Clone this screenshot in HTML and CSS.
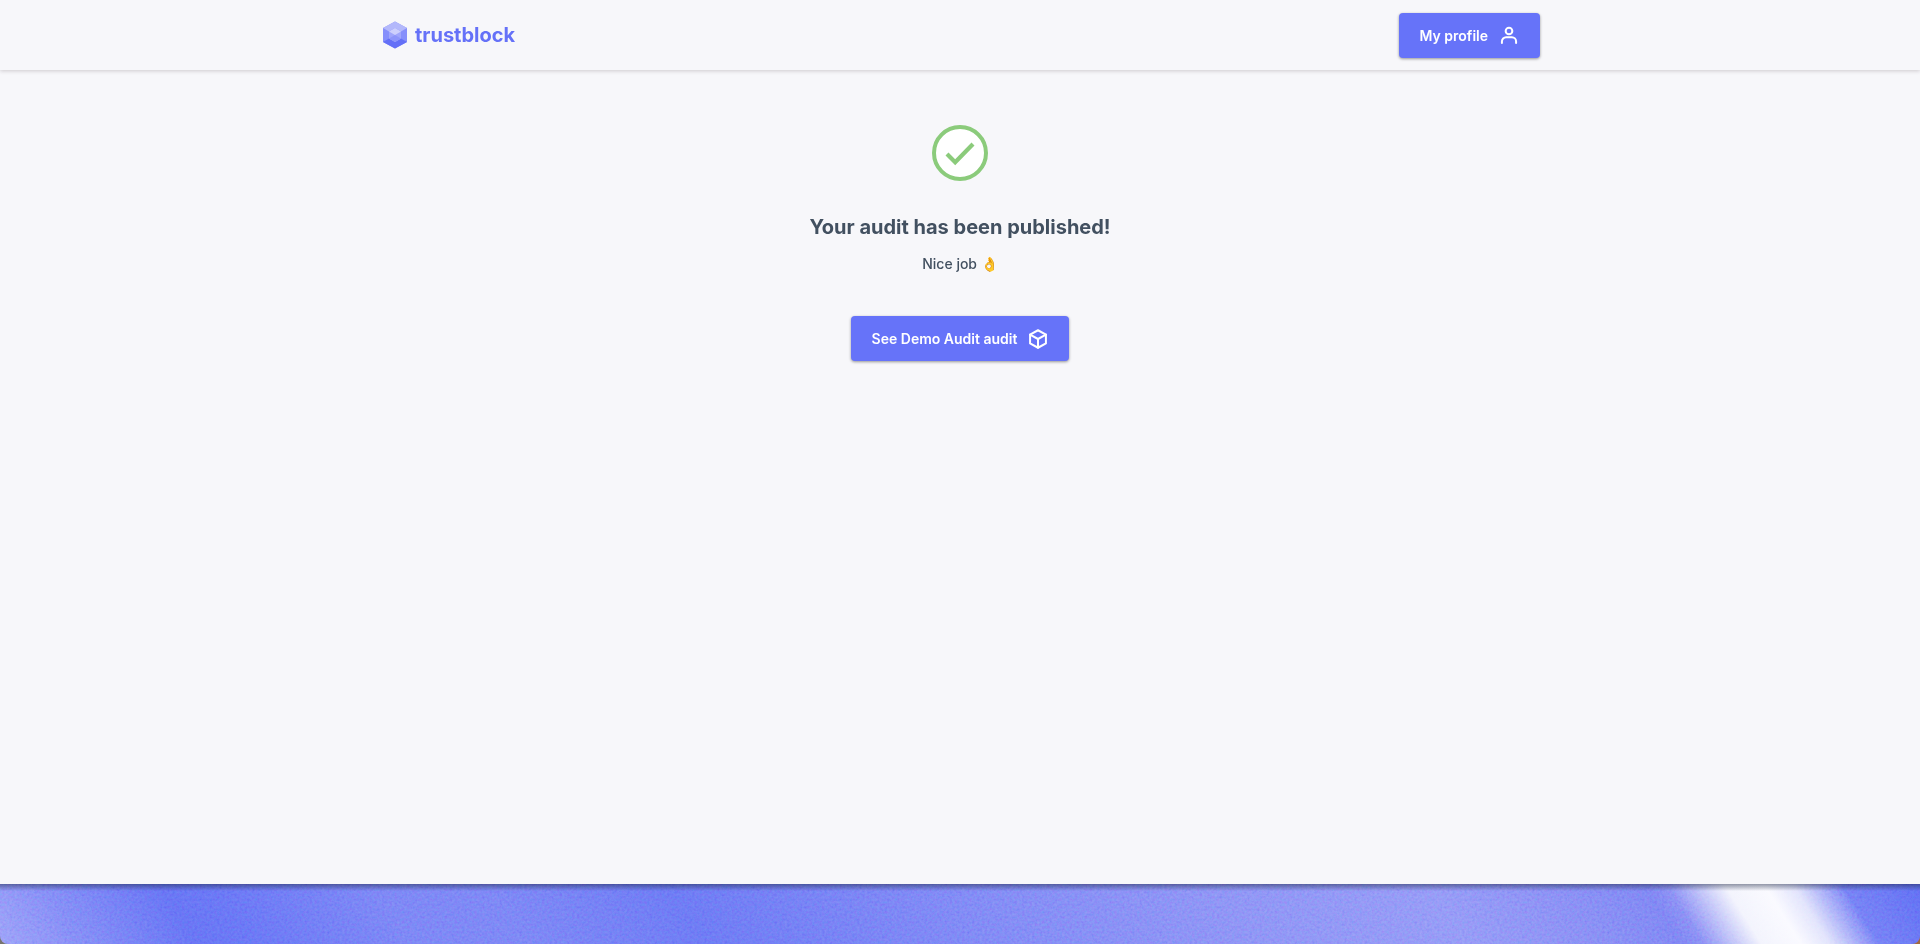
FILE: index.html
```html
<!DOCTYPE html>
<html lang="en">
<head>
    <meta charset="UTF-8">
    <meta name="viewport" content="width=device-width, initial-scale=1.0">
    <title>Trustblock</title>
    <link rel="stylesheet" href="styles.css">
</head>
<body>

    <header class="header">
        <div class="header-content">
            <a class="logo" href="#">
                <svg class="logo-icon" viewBox="0 0 26 28" aria-hidden="true">
                    <path d="M13 0.5 25 7v14l-12 6.5L1 21V7z" fill="#868ffb"/>
                    <path d="M13 0.5 25 7l-6 3.4L13 7l-6 3.4L1 7z" fill="#b3b8fb"/>
                    <path d="M1 21l6-3.4 6 3.4 6-3.4 6 3.4-12 6.5z" fill="#6470f7"/>
                    <path d="M13 7l6 3.4v7.2L13 21l-6-3.4v-7.2z" fill="#a0a6fb"/>
                    <path d="M13 7l6 3.4-6 3.6-6-3.6z" fill="#cdd0fc"/>
                    <path d="M7 17.600l6-3.600 6 3.600-6 3.400z" fill="#8d95fa"/>
                </svg>
                <span>trustblock</span>
            </a>
            <button class="button" type="button">
                My profile
                <svg class="button-icon" viewBox="0 0 24 24" aria-hidden="true">
                    <circle cx="12" cy="6" r="4"/>
                    <path d="M3.500 20.500v-2a5 5 0 0 1 5-5h7a5 5 0 0 1 5 5v2"/>
                </svg>
            </button>
        </div>
    </header>

    <main class="main">
        <svg class="success-icon" viewBox="0 0 56 56" aria-hidden="true">
            <circle cx="28" cy="28" r="26" fill="#fff" stroke="#8bcb7b" stroke-width="4"/>
            <path d="M15 29l8.200 8.200L41 19" fill="none" stroke="#8bcb7b" stroke-width="4.200"/>
        </svg>
        <h1 class="title">Your audit has been published!</h1>
        <p class="subtitle">Nice job 👌</p>
        <button class="button" type="button">
            See Demo Audit audit
            <svg class="button-icon" viewBox="0 0 24 24" aria-hidden="true">
                <path d="M12 1.500l9.500 5.250v10.500L12 22.500l-9.500-5.250V6.750z"/>
                <path d="M2.500 6.750L12 12l9.500-5.250M12 12v10.500"/>
            </svg>
        </button>
    </main>

    <footer class="footer">
        <svg class="grain" aria-hidden="true">
            <filter id="grain">
                <feTurbulence type="fractalNoise" baseFrequency="0.4" numOctaves="2" seed="4"/>
                <feColorMatrix values="1 0 0 0 0  0 1 0 0 0  0 0 1 0 0  0 0 0 0 1"/>
            </filter>
            <rect width="100%" height="100%" filter="url(#grain)"/>
        </svg>
    </footer>

</body>
</html>
```

FILE: styles.css
```css
body {
    font-family: Inter, sans-serif;
    margin: 0;
    min-height: 100vh;
    display: flex;
    flex-direction: column;
    background: linear-gradient(90deg, #77756f, #a06a40);
    color: #425060;
}

.header {
    position: relative;
    background-color: #f7f7fa;
    box-shadow: 0 1px 4px rgba(60, 40, 50, 0.22);
}

.header-content {
    display: flex;
    align-items: center;
    justify-content: space-between;
    box-sizing: border-box;
    max-width: 1160px;
    height: 70px;
    margin: 0 auto;
    padding-top: 1px;
}

.logo {
    display: flex;
    align-items: center;
    gap: 6px;
    padding: 0 0 2px 1px;
    color: #6571f8;
    font-size: 20px;
    font-weight: 700;
    text-decoration: none;
}

.logo-icon {
    width: 28px;
    height: 28px;
}

.button {
    display: flex;
    align-items: center;
    gap: 11px;
    height: 45px;
    padding: 0 21px;
    border: none;
    border-radius: 4px;
    background-color: #6673f9;
    box-shadow: 0 1px 3px rgba(0, 0, 0, 0.4);
    color: #fff;
    font-family: inherit;
    font-size: 14px;
    font-weight: 600;
    cursor: pointer;
}

.button:hover {
    background-color: #5562e8;
}

.button-icon {
    width: 20px;
    height: 20px;
    fill: none;
    stroke: #fff;
    stroke-width: 2.4;
    stroke-linejoin: round;
    stroke-linecap: round;
}

.main {
    flex: 1;
    display: flex;
    flex-direction: column;
    align-items: center;
    padding-top: 55px;
    background-color: #f7f7fa;
}

.success-icon {
    width: 56px;
    height: 56px;
}

.title {
    margin: 32px 0 13px;
    font-size: 20px;
    font-weight: 700;
    line-height: 28px;
}

.subtitle {
    margin: 0 0 42px;
    font-size: 14px;
    font-weight: 500;
    line-height: 20px;
}

.footer {
    position: relative;
    height: 60px;
    overflow: hidden;
    border-radius: 0 0 8px 8px;
    background: linear-gradient(58deg, #9298f8 0%, #7a82f6 4%, #5f6bf4 10%, #616df5 13%, #727bf5 21%, #727bf5 27%, #6470f4 36%, #757df5 50%, #8289f5 64%, #8a90f6 75%, #757bf3 86%, #7f84f4 87%, #f2f3fd 90%, #fafaff 92%, #dfe1fc 93.500%, #6c76f5 96%, #5966f3 100%);
}

/* shadow of the page along the top edge */
.footer::after {
    content: "";
    position: absolute;
    top: 0;
    left: 0;
    right: 0;
    height: 7px;
    background: linear-gradient(rgba(20, 30, 60, 0.45), rgba(20, 30, 60, 0));
}

.grain {
    position: absolute;
    inset: 0;
    width: 100%;
    height: 100%;
    opacity: 0.25;
    mix-blend-mode: overlay;
}
```
